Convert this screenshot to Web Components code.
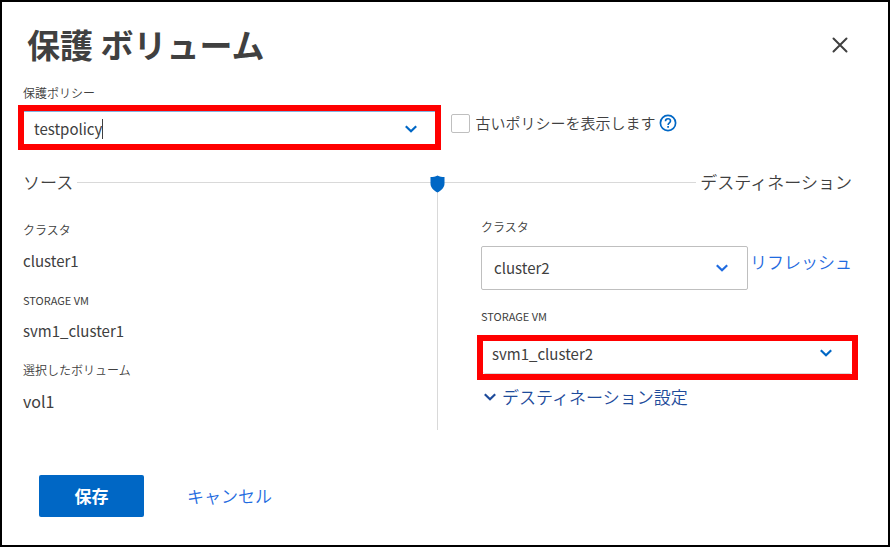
<!DOCTYPE html>
<html lang="ja">
<head>
<meta charset="utf-8">
<meta name="viewport" content="width=device-width, initial-scale=1">
<title>保護 ボリューム</title>
<style>
    body {
        margin: 0;
        background: #fff;
        color: #404040;
        font-family: "Noto Sans CJK JP", sans-serif;
        font-size: 15px;
        line-height: 24px;
        --blue: #0067c5;
        --link: #1f6be0;
        --line: #d9d9d9;
        --mark: #ff0000;
        --light: 350;
    }
</style>
</head>
<body>
<protect-dialog></protect-dialog>

<script>
const chevron = `
    <svg class="chevron" width="14" height="10" viewBox="0 0 14 10" aria-hidden="true">
        <path d="M1.8 2.2 7 7.3l5.2-5.1" fill="none" stroke="currentColor" stroke-width="2.2"/>
    </svg>`;

// label + value pair in the source column
class InfoItem extends HTMLElement {
    constructor() {
        super();
        this.attachShadow({mode: "open"});
        this.shadowRoot.innerHTML = `
            <style>
                :host {
                    display: block;
                }
                dl, dd {
                    margin: 0;
                }
                dt {
                    font-size: 12px;
                    font-weight: var(--light);
                    line-height: 20px;
                    margin-bottom: 9px;
                }
                ::slotted(:lang(en)) {
                    font-size: 11px;
                    font-weight: 400;
                }
            </style>
            <dl>
                <dt><slot name="label"></slot></dt>
                <dd><slot></slot></dd>
            </dl>`;
    }
}

// drop-down with a label above it
class SelectField extends HTMLElement {
    constructor() {
        super();
        this.attachShadow({mode: "open"});
    }

    connectedCallback() {
        const label = this.getAttribute("label");
        const value = this.getAttribute("value");
        this.shadowRoot.innerHTML = `
            <style>
                :host {
                    display: block;
                }
                label {
                    display: block;
                    font-size: 12px;
                    font-weight: var(--light);
                    line-height: 20px;
                    margin-bottom: 9px;
                }
                label:lang(en) {
                    font-size: 11px;
                    font-weight: 400;
                }
                .box {
                    display: grid;
                    align-items: center;
                    box-sizing: border-box;
                    height: 44px;
                    border: 1px solid #bfbfbf;
                    border-radius: 2px;
                }
                select {
                    grid-area: 1 / 1;
                    appearance: none;
                    width: 100%;
                    height: 100%;
                    margin: 0;
                    padding: 0 40px 0 12px;
                    border: 0;
                    background: none;
                    color: inherit;
                    font: inherit;
                    outline: none;
                }
                .chevron {
                    grid-area: 1 / 1;
                    justify-self: end;
                    margin-right: 18px;
                    color: var(--link);
                    pointer-events: none;
                }
                :host([marked]) .box {
                    height: 45px;
                    margin: 0 -6px 0 -4px;
                    border: 6px solid var(--mark);
                    border-radius: 0;
                }
                :host([marked]) select {
                    padding: 0 40px 6px 9px;
                    border-bottom: 1px solid var(--line);
                    border-radius: 3px;
                }
                :host([marked]) .chevron {
                    margin: 0 19px 10px 0;
                    color: var(--blue);
                }
            </style>
            <label for="field">${label}</label>
            <div class="box">
                <select id="field"><option>${value}</option></select>
                ${chevron}
            </div>`;
    }
}

// editable policy box, with the text cursor behind the value
class PolicyField extends HTMLElement {
    constructor() {
        super();
        this.attachShadow({mode: "open"});
        this.shadowRoot.innerHTML = `
            <style>
                :host {
                    display: block;
                }
                label {
                    display: block;
                    font-size: 12px;
                    font-weight: var(--light);
                    line-height: 20px;
                    margin-bottom: 2px;
                }
                .box {
                    display: flex;
                    align-items: center;
                    box-sizing: border-box;
                    height: 45px;
                    margin-left: -5px;
                    padding: 3px 17px 0 10px;
                    border: 6px solid var(--mark);
                    box-shadow: inset 0 1px #7fb3e2;
                }
                input {
                    field-sizing: content;
                    padding: 0;
                    border: 0;
                    background: none;
                    color: inherit;
                    font: inherit;
                    outline: none;
                }
                .cursor {
                    width: 1px;
                    height: 20px;
                    background: #404040;
                }
                button {
                    display: flex;
                    margin-left: auto;
                    padding: 0;
                    border: 0;
                    background: none;
                    color: var(--blue);
                }
            </style>
            <label for="policy">保護ポリシー</label>
            <div class="box">
                <input id="policy" type="text" value="testpolicy">
                <span class="cursor"></span>
                <button type="button" aria-label="保護ポリシー">${chevron}</button>
            </div>`;
    }
}

class OldPolicies extends HTMLElement {
    constructor() {
        super();
        this.attachShadow({mode: "open"});
        this.shadowRoot.innerHTML = `
            <style>
                :host {
                    display: flex;
                    align-items: center;
                }
                label {
                    display: flex;
                    align-items: center;
                    gap: 6px;
                    font-weight: var(--light);
                }
                input {
                    appearance: none;
                    box-sizing: border-box;
                    width: 19px;
                    height: 19px;
                    margin: 0;
                    border: 1px solid #bfbfbf;
                    border-radius: 2px;
                }
                button {
                    display: flex;
                    margin-left: 3px;
                    padding: 0;
                    border: 0;
                    background: none;
                    color: var(--blue);
                }
            </style>
            <label><input type="checkbox">古いポリシーを表示します</label>
            <button type="button" aria-label="ヘルプ">
                <svg width="18" height="18" viewBox="0 0 18 18" fill="none" stroke="currentColor">
                    <circle cx="9" cy="9" r="7.6" stroke-width="1.7"/>
                    <path d="M6.5 7.2C6.5 5.7 7.6 4.8 9 4.8s2.5.9 2.5 2.2c0 1.8-2.4 2-2.4 4" stroke-width="1.6"/>
                    <path d="M9.1 12.1v1.7" stroke-width="1.7"/>
                </svg>
            </button>`;
    }
}

// section title with a rule running to the centre
class SectionHead extends HTMLElement {
    constructor() {
        super();
        this.attachShadow({mode: "open"});
        this.shadowRoot.innerHTML = `
            <style>
                :host {
                    display: flex;
                    align-items: center;
                    gap: 4px;
                }
                :host([end]) {
                    flex-direction: row-reverse;
                }
                h2 {
                    margin: 0;
                    font-size: 17px;
                    font-weight: var(--light);
                    line-height: 24px;
                }
                span {
                    flex: 1;
                    height: 1px;
                    background: var(--line);
                }
            </style>
            <h2><slot></slot></h2>
            <span></span>`;
    }
}

class ProtectDialog extends HTMLElement {
    constructor() {
        super();
        this.attachShadow({mode: "open"});
        this.shadowRoot.innerHTML = `
            <style>
                :host {
                    display: block;
                    box-sizing: border-box;
                    min-height: 100vh;
                    padding: 18px 36px 26px 21px;
                    border: 2px solid #000;
                }
                header {
                    display: flex;
                    justify-content: space-between;
                    align-items: center;
                    padding: 0 4px;
                }
                h1 {
                    margin: 0;
                    font-size: 33px;
                    font-weight: 700;
                    line-height: 48px;
                }
                button {
                    margin: 0;
                    padding: 0;
                    border: 0;
                    background: none;
                    color: inherit;
                    font: inherit;
                }
                .close {
                    display: flex;
                    padding-top: 2px;
                }
                .policy {
                    display: grid;
                    grid-template-columns: 1fr 1fr;
                    column-gap: 8px;
                    margin-top: 15px;
                }
                policy-field {
                    margin-right: -7px;
                }
                old-policies {
                    align-self: end;
                    margin: 0 0 15px 9px;
                }
                .sides {
                    display: grid;
                    grid-template-columns: 1fr 1px 1fr;
                    margin-top: 20px;
                }
                .divider {
                    position: relative;
                    margin-top: 12px;
                    background: var(--line);
                }
                .divider svg {
                    position: absolute;
                    top: -7px;
                    left: -7px;
                }
                .source, .destination {
                    display: grid;
                    align-content: start;
                }
                .source {
                    padding-bottom: 17px;
                }
                .items {
                    display: grid;
                    gap: 17px;
                    margin-top: 26px;
                }
                .items info-item:last-child {
                    font-size: 16px;
                }
                .fields {
                    margin: 23px 0 0 43px;
                }
                .cluster {
                    display: flex;
                    align-items: end;
                    gap: 2px;
                }
                .cluster select-field {
                    flex: 1;
                }
                a, .settings {
                    font-size: 17px;
                    font-weight: var(--light);
                }
                a {
                    color: var(--link);
                    text-decoration: none;
                }
                .cluster a {
                    margin-bottom: 16px;
                }
                .vm {
                    margin-top: 16px;
                }
                .settings {
                    display: flex;
                    align-items: center;
                    gap: 5px;
                    margin: 5px 0 0 2px;
                    color: #1e4b9b;
                }
                footer {
                    display: flex;
                    align-items: center;
                    gap: 43px;
                    margin: 45px 0 0 16px;
                }
                .save {
                    width: 105px;
                    height: 42px;
                    border-radius: 2px;
                    background: var(--blue);
                    color: #fff;
                    font-size: 17px;
                    font-weight: 700;
                }
            </style>
            <header>
                <h1>保護 ボリューム</h1>
                <button class="close" type="button" aria-label="閉じる">
                    <svg width="16" height="16" viewBox="0 0 16 16">
                        <path d="M1.5 1.5l13 13M14.5 1.5l-13 13" stroke="currentColor" stroke-width="2" stroke-linecap="round"/>
                    </svg>
                </button>
            </header>
            <div class="policy">
                <policy-field></policy-field>
                <old-policies></old-policies>
            </div>
            <div class="sides">
                <section class="source">
                    <section-head>ソース</section-head>
                    <div class="items">
                        <info-item><span slot="label">クラスタ</span>cluster1</info-item>
                        <info-item><span slot="label" lang="en">STORAGE VM</span>svm1_cluster1</info-item>
                        <info-item><span slot="label">選択したボリューム</span>vol1</info-item>
                    </div>
                </section>
                <div class="divider">
                    <svg width="15" height="18" viewBox="0 0 15 18" aria-hidden="true">
                        <path d="M7.5.5C9.5 1.6 12 2 14.5 2v6.5c0 4-3 7-7 9-4-2-7-5-7-9V2c2.5 0 5-.4 7-1.5z" fill="#0067c5"/>
                    </svg>
                </div>
                <section class="destination">
                    <section-head end>デスティネーション</section-head>
                    <div class="fields">
                        <div class="cluster">
                            <select-field label="クラスタ" value="cluster2"></select-field>
                            <a href="#">リフレッシュ</a>
                        </div>
                        <select-field class="vm" lang="en" label="STORAGE VM" value="svm1_cluster2" marked></select-field>
                        <button class="settings" type="button">${chevron}デスティネーション設定</button>
                    </div>
                </section>
            </div>
            <footer>
                <button class="save" type="button">保存</button>
                <a href="#">キャンセル</a>
            </footer>`;
    }
}

customElements.define("info-item", InfoItem);
customElements.define("select-field", SelectField);
customElements.define("policy-field", PolicyField);
customElements.define("old-policies", OldPolicies);
customElements.define("section-head", SectionHead);
customElements.define("protect-dialog", ProtectDialog);
</script>
</body>
</html>
